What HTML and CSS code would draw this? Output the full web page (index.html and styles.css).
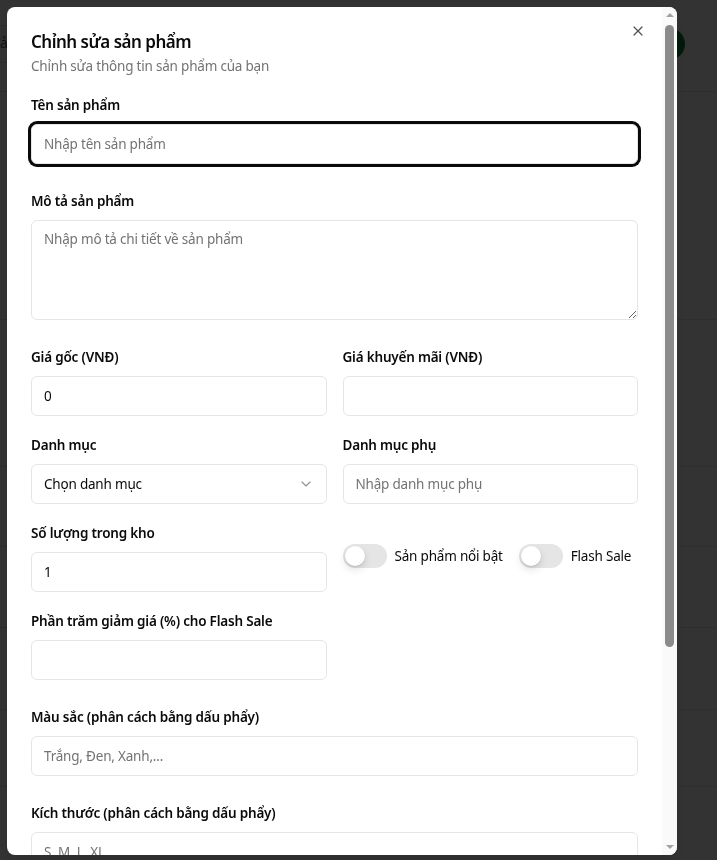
FILE: index.html
```html
<!DOCTYPE html>
<html lang="vi">
<head>
<meta charset="utf-8">
<title>Chỉnh sửa sản phẩm</title>
<link rel="stylesheet" href="styles.css">
</head>
<body>
<div class="page">
  <header class="page-head">
    <div class="crumb">ả</div>
    <span class="avatar"></span>
  </header>
  <div class="row r1"></div>
  <div class="row r2"></div>
  <div class="row r3"></div>
  <div class="row r4"></div>
  <div class="row r5"></div>
  <div class="row r6"></div>
  <div class="row r7"></div>
</div>
<div class="overlay"></div>

<div class="dialog" role="dialog">
  <button class="close" aria-label="Đóng">
    <svg width="16" height="16" viewBox="0 0 24 24" fill="none" stroke="currentColor" stroke-width="1.8" stroke-linecap="round" stroke-linejoin="round"><path d="M18 6 6 18"/><path d="m6 6 12 12"/></svg>
  </button>
  <div class="head">
    <h2 class="title">Chỉnh sửa sản phẩm</h2>
    <p class="desc">Chỉnh sửa thông tin sản phẩm của bạn</p>
  </div>
  <form class="form">
    <div class="field">
      <label class="label">Tên sản phẩm</label>
      <input class="input focused" placeholder="Nhập tên sản phẩm">
    </div>
    <div class="field">
      <label class="label">Mô tả sản phẩm</label>
      <textarea class="input textarea" placeholder="Nhập mô tả chi tiết về sản phẩm"></textarea>
    </div>
    <div class="grid">
      <div class="field">
        <label class="label">Giá gốc (VNĐ)</label>
        <input class="input" value="0">
      </div>
      <div class="field">
        <label class="label">Giá khuyến mãi (VNĐ)</label>
        <input class="input">
      </div>
      <div class="field">
        <label class="label">Danh mục</label>
        <button type="button" class="input select">
          <span>Chọn danh mục</span>
          <svg width="16" height="16" viewBox="0 0 24 24" fill="none" stroke="currentColor" stroke-width="1.6" stroke-linecap="round" stroke-linejoin="round"><path d="m6 9 6 6 6-6"/></svg>
        </button>
      </div>
      <div class="field">
        <label class="label">Danh mục phụ</label>
        <input class="input" placeholder="Nhập danh mục phụ">
      </div>
      <div class="field">
        <label class="label">Số lượng trong kho</label>
        <input class="input" value="1">
      </div>
      <div class="toggles">
        <div class="toggle"><span class="switch"><span class="knob"></span></span><span class="tlabel">Sản phẩm nổi bật</span></div>
        <div class="toggle"><span class="switch"><span class="knob"></span></span><span class="tlabel">Flash Sale</span></div>
      </div>
      <div class="field">
        <label class="label">Phần trăm giảm giá (%) cho Flash Sale</label>
        <input class="input">
      </div>
    </div>
    <div class="field">
      <label class="label">Màu sắc (phân cách bằng dấu phẩy)</label>
      <input class="input" placeholder="Trắng, Đen, Xanh,...">
    </div>
    <div class="field">
      <label class="label">Kích thước (phân cách bằng dấu phẩy)</label>
      <input class="input" placeholder="S, M, L, XL">
    </div>
  </form>
  <div class="scrollbar" aria-hidden="true">
    <span class="arrow up"></span>
    <span class="thumb"></span>
    <span class="arrow down"></span>
  </div>
</div>
</body>
</html>
```
FILE: styles.css
```css
* { box-sizing: border-box; }
html, body { margin: 0; padding: 0; }
body {
  font-family: "Noto Sans", "Liberation Sans", sans-serif;
  color: #0a0a0a;
  background: #ffffff;
  width: 717px;
  height: 860px;
  overflow: hidden;
}

/* background page */
.page { background: #fff; }
.page-head {
  height: 92px;
  border-bottom: 1px solid #e5e5e5;
  display: flex;
  align-items: center;
  justify-content: space-between;
  padding: 0 18px 0 0;
}
.crumb {
  height: 38px;
  margin-top: -4px;
  width: 200px;
  border-top: 1px solid #e5e5e5;
  border-bottom: 1px solid #e5e5e5;
  font-size: 14px;
  line-height: 34px;
  color: #555;
  padding-left: 0;
}
.avatar {
  width: 32px; height: 32px; border-radius: 50%;
  background: #04823c;
  margin-top: -4px;
  margin-right: 14px;
}
.row { border-bottom: 1px solid #e5e5e5; }
.r1 { height: 228px; }
.r2 { height: 147px; }
.r3 { height: 80px; }
.r4 { height: 81px; }
.r5 { height: 82px; }
.r6 { height: 77px; }
.r7 { height: 80px; }
.overlay {
  position: fixed; inset: 0;
  background: rgba(0, 0, 0, 0.8);
}

/* dialog */
.dialog {
  position: fixed;
  left: 7px;
  top: 7px;
  width: 670px;
  height: 848px;
  background: #fff;
  border-radius: 8px;
  padding: 25px 39px 24px 24px;
  overflow: hidden;
  box-shadow: 0 10px 15px rgba(0,0,0,0.1);
}

/* drawn scrollbar (the dialog content is scrolled) */
.scrollbar {
  position: absolute;
  top: 0; right: 0; bottom: 0;
  width: 15px;
  background: #fafafa;
  display: flex;
  flex-direction: column;
  align-items: center;
}
.arrow {
  width: 0; height: 0;
  border-left: 4px solid transparent;
  border-right: 4px solid transparent;
  margin-left: 1px;
}
.arrow.up { border-bottom: 4px solid #a3a3a3; margin-top: 6px; }
.arrow.down { border-top: 4px solid #a3a3a3; margin-top: auto; margin-bottom: 6px; }
.thumb {
  width: 9px;
  height: 622px;
  margin-top: 8px;
  border-radius: 5px;
  background: #8b8b8b;
}

.close {
  position: absolute;
  right: 31px;
  top: 16px;
  width: 16px; height: 16px;
  padding: 0;
  border: 0;
  background: transparent;
  color: #0a0a0a;
  opacity: 0.7;
  display: flex;
}

.head { display: flex; flex-direction: column; gap: 4px; }
.title {
  margin: 0;
  font-size: 17px;
  line-height: 20px;
  font-weight: 600;
  letter-spacing: -0.5px;
}
.desc {
  margin: 0;
  font-size: 13.5px;
  line-height: 20px;
  color: #737373;
  letter-spacing: -0.2px;
}

.form {
  margin-top: 22px;
  display: flex;
  flex-direction: column;
  gap: 30px;
}
.field { display: flex; flex-direction: column; gap: 12px; }
.label {
  font-size: 13.5px;
  line-height: 14px;
  font-weight: 600;
  letter-spacing: -0.2px;
}
.grid {
  display: grid;
  grid-template-columns: 1fr 1fr;
  column-gap: 16px;
  row-gap: 22px;
}
.input {
  display: block;
  width: 100%;
  height: 40px;
  border: 1px solid #e5e5e5;
  border-radius: 6px;
  background: #fff;
  padding: 8px 12px;
  font-family: inherit;
  font-size: 13.5px;
  letter-spacing: -0.2px;
  line-height: 20px;
  color: #0a0a0a;
  outline: none;
}
.input::placeholder { color: #737373; }
.input.focused { box-shadow: 0 0 0 3px #0a0a0a; border-radius: 6px; }
.textarea { height: 100px; resize: vertical; }
.select {
  display: flex;
  align-items: center;
  justify-content: space-between;
  text-align: left;
}
.select svg { color: #0a0a0a; opacity: 0.45; }

.toggles {
  display: flex;
  align-items: center;
  gap: 16px;
  padding-top: 18px;
  align-self: start;
}
.toggle { display: flex; align-items: center; gap: 8px; }
.switch {
  width: 44px; height: 24px;
  border-radius: 12px;
  background: #e5e5e5;
  padding: 2px;
  display: flex;
}
.knob {
  width: 20px; height: 20px;
  border-radius: 50%;
  background: #fff;
  box-shadow: 0 4px 8px rgba(0,0,0,0.12), 0 1px 2px rgba(0,0,0,0.1);
}
.tlabel { font-size: 13.5px; line-height: 20px; letter-spacing: -0.2px; }
```
